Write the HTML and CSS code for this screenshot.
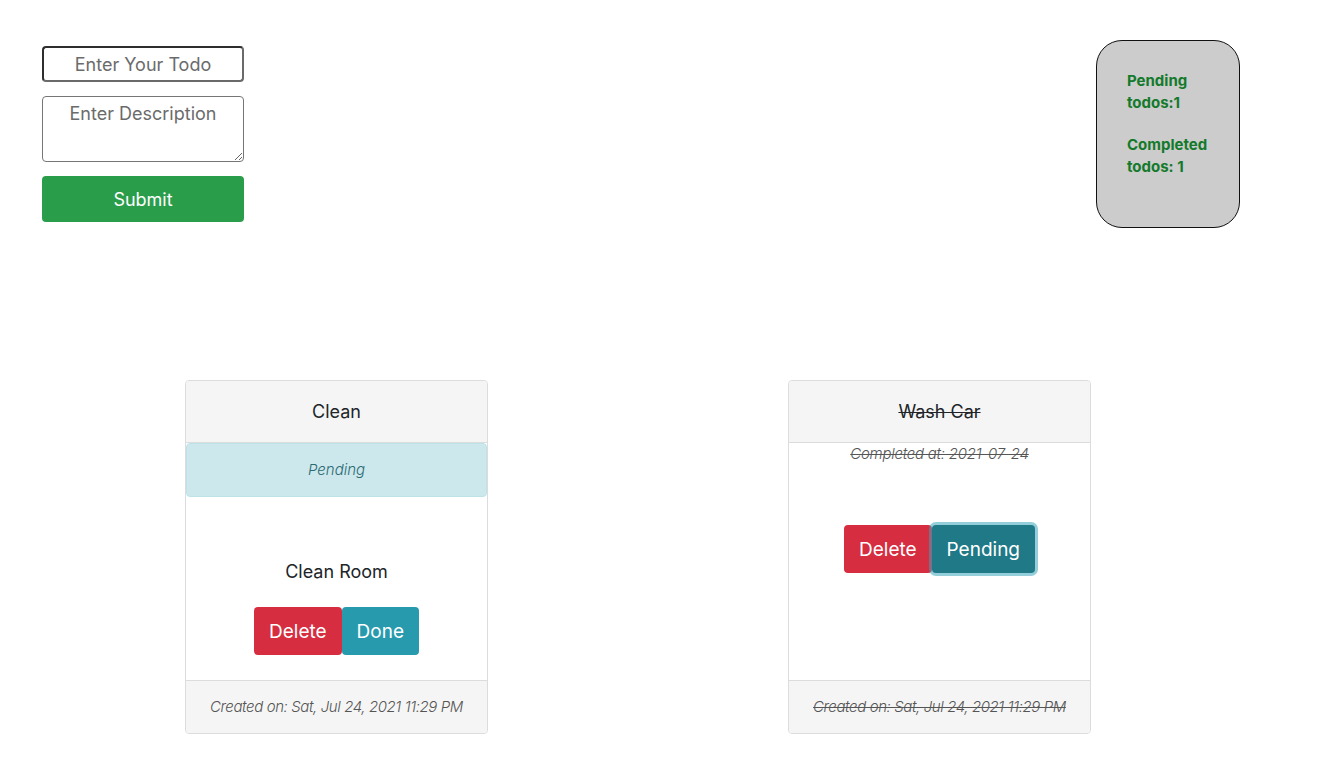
FILE: index.html
```html
<!DOCTYPE html>
<html>
<head>
<meta charset="utf-8">
<link rel="stylesheet" href="styles.css">
</head>
<body>
<div class="top">
  <form class="todo-form">
    <input class="todo-input" type="text" placeholder="Enter Your Todo">
    <textarea class="todo-desc" placeholder="Enter Description"></textarea>
    <button type="button" class="submit-btn">Submit</button>
  </form>
  <div class="stats">
    <p>Pending todos:1</p>
    <p>Completed todos: 1</p>
  </div>
</div>
<div class="cards">
  <div class="card">
    <div class="card-header">Clean</div>
    <div class="card-body">
      <div class="alert">Pending</div>
      <div class="desc">Clean Room</div>
      <div class="btns">
        <button class="btn btn-danger">Delete</button><button class="btn btn-info">Done</button>
      </div>
    </div>
    <div class="card-footer">Created on: Sat, Jul 24, 2021 11:29 PM</div>
  </div>
  <div class="card done">
    <div class="card-header"><s>Wash Car</s></div>
    <div class="card-body">
      <div class="completed"><s>Completed at: 2021-07-24</s></div>
      <div class="btns btns-done">
        <button class="btn btn-danger">Delete</button><button class="btn btn-info-active">Pending</button>
      </div>
    </div>
    <div class="card-footer"><s>Created on: Sat, Jul 24, 2021 11:29 PM</s></div>
  </div>
</div>
</body>
</html>
```
FILE: styles.css
```css
* { box-sizing: border-box; }
body {
  margin: 0;
  font-family: Inter, "Liberation Sans", sans-serif;
  color: #212529;
  background: #fff;
}
.top {
  display: flex;
  justify-content: space-between;
  align-items: flex-start;
  padding: 40px 101px 0 42px;
}
.todo-form {
  display: flex;
  flex-direction: column;
  gap: 14px;
  width: 202px;
  margin: 6px 0 0 0;
}
.todo-input {
  height: 36px;
  width: 202px;
  border: 2px solid;
  border-color: #2e2e2e #6a6a6a #6a6a6a #2e2e2e;
  border-radius: 4px;
  font-family: inherit;
  font-size: 18px;
  text-align: center;
  padding: 0 4px;
  outline: none;
}
.todo-desc {
  height: 66px;
  width: 202px;
  border: 1px solid #767676;
  border-radius: 4px;
  font-family: inherit;
  font-size: 18px;
  text-align: center;
  padding: 6px 4px;
  line-height: 1.2;
  resize: vertical;
  outline: none;
}
.todo-input::placeholder, .todo-desc::placeholder { color: #6b6b6b; }
.submit-btn {
  height: 46px;
  width: 202px;
  border: none;
  border-radius: 4px;
  background: #2a9d4b;
  color: #fff;
  font-family: inherit;
  font-size: 18px;
}
.stats {
  width: 144px;
  height: 188px;
  background: #cccccc;
  border: 1px solid #111;
  border-radius: 26px;
  padding: 29px 23px 0 30px;
  color: #137a2b;
  font-weight: 700;
  font-size: 15px;
  line-height: 22px;
}
.stats p { margin: 0 0 20px 0; }
.cards {
  display: grid;
  grid-template-columns: 303px 303px;
  column-gap: 300px;
  padding-left: 185px;
  margin-top: 152px;
}
.card {
  display: flex;
  flex-direction: column;
  border: 1px solid #dcdcdc;
  border-radius: 4px;
  overflow: hidden;
}
.card-header {
  background: #f5f5f5;
  border-bottom: 1px solid #dcdcdc;
  padding: 17px 10px;
  font-size: 18px;
  line-height: 27px;
  text-align: center;
}
.card-body {
  flex: 1;
  display: flex;
  flex-direction: column;
  align-items: center;
  padding-bottom: 25px;
}
.alert {
  align-self: stretch;
  background: #cce8ec;
  border: 1px solid #bde3e9;
  border-radius: 4px;
  color: #2b6a73;
  font-style: italic;
  font-weight: 300;
  font-size: 15px;
  line-height: 22px;
  padding: 15px;
  text-align: center;
}
.desc {
  margin-top: 61px;
  font-size: 18px;
  line-height: 27px;
}
.btns {
  display: flex;
  margin-top: 22px;
}
.btns-done { margin-top: 60px; }
.completed {
  font-style: italic;
  font-weight: 300;
  font-size: 15px;
  line-height: 22px;
  color: #555;
  letter-spacing: -0.25px;
}
.btn, .btn-info-active {
  height: 48px;
  border: none;
  border-radius: 4px;
  padding: 0 15px;
  font-family: inherit;
  font-size: 19px;
  color: #fff;
}
.btn-danger { background: #d62d40; }
.btn-info { background: #289aae; }
.btn-info-active {
  background: #1f7986;
  box-shadow: 0 0 0 3px rgba(58, 166, 188, 0.55);
  position: relative;
}
.card-footer {
  background: #f5f5f5;
  border-top: 1px solid #dcdcdc;
  padding: 15px 10px;
  font-style: italic;
  font-weight: 300;
  font-size: 15px;
  line-height: 22px;
  color: #555;
  text-align: center;
  letter-spacing: -0.4px;
}
s { text-decoration-thickness: 1px; }
```
